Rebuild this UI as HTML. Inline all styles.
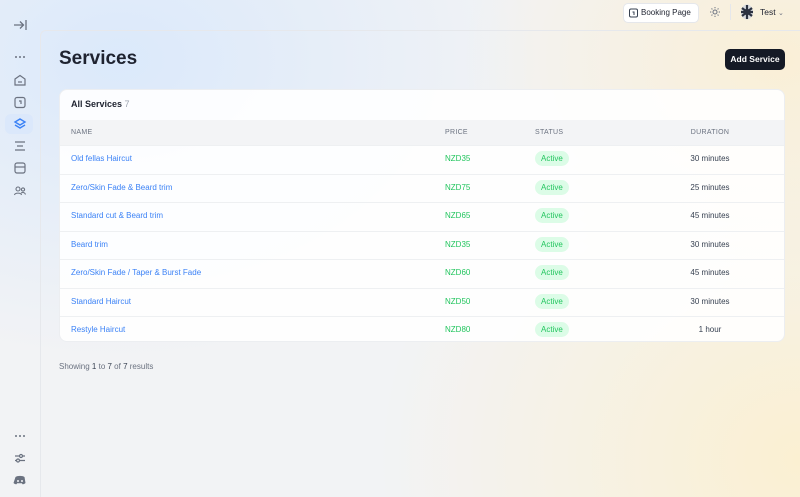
<!DOCTYPE html>
<html><head><meta charset="utf-8"><style>
*{box-sizing:border-box;margin:0;padding:0}
body{width:800px;height:497px;overflow:hidden;font-family:"Liberation Sans",sans-serif;background:#f3f4f6;position:relative}
.bg{position:absolute;inset:0;background:radial-gradient(ellipse 420px 300px at 120px 60px,#dbe9fb 0%,rgba(219,233,251,0) 100%),radial-gradient(ellipse 420px 380px at 800px 460px,#fbf0d2 0%,rgba(251,240,210,0) 100%),radial-gradient(ellipse 320px 240px at 780px 60px,#faefd6 0%,rgba(250,239,214,0) 100%),#f2f3f5}
.side{position:absolute;left:0;top:0;width:40px;height:497px}
.ic{position:absolute;left:11px;width:18px;height:18px;color:#6b7280}
.main{position:absolute;left:40px;top:30px;width:760px;height:467px;border-top:1px solid #e6e8ec;border-left:1px solid #e6e8ec;border-top-left-radius:6px}
h1{position:absolute;left:59px;top:48px;font-size:19px;font-weight:bold;color:#1f2330}
.add{position:absolute;left:725px;top:49px;width:60px;height:21px;background:#151a26;color:#fff;font-size:8.5px;font-weight:bold;border-radius:5px;text-align:center;line-height:21px}
.card{position:absolute;left:59px;top:89px;width:726px;height:253px;background:rgba(255,255,255,.9);border-radius:8px;overflow:hidden;border:1px solid #eceef1}
.ct{position:absolute;left:11px;top:9px;font-size:9px;font-weight:bold;color:#1f2330}
.ct span{color:#9ca3af;font-weight:normal}
.th{position:absolute;left:0;top:30px;width:100%;height:25px;background:#f3f4f6;font-size:7px;color:#6b7280;letter-spacing:.3px}
.th div,.row div{position:absolute}
.row{position:absolute;left:0;width:100%;height:28.5px;border-top:1px solid #eef0f2;font-size:8px}
.n{left:11px;top:8px;color:#3b82f6}
.p{left:385px;top:8px;color:#22c55e}
.s{left:475px;top:5px;background:#dcfce7;color:#22c55e;border-radius:8px;padding:3px 6px;font-size:8px}
.d{left:600px;width:100px;text-align:center;top:8px;color:#374151}
.top{position:absolute;top:3px;font-size:8px;color:#1f2330}
.bp{left:623px;width:76px;height:20px;background:#fff;border:1px solid #e5e7eb;border-radius:5px;line-height:18px;padding-left:17px}
.foot{position:absolute;left:59px;top:362px;font-size:8px;color:#6b7280}
.foot b{color:#374151;font-weight:normal}
</style></head><body>
<div class="bg"></div>
<div class="side">
<svg class="ic" style="top:16px" viewBox="0 0 18 18" fill="none" stroke="#6b7280" stroke-width="1.3"><path d="M3 9h9M9 5.5 12.5 9 9 12.5M15 4v10"/></svg>
<svg class="ic" style="top:48px" viewBox="0 0 18 18" fill="#6b7280"><circle cx="5" cy="9" r="1"/><circle cx="9" cy="9" r="1"/><circle cx="13" cy="9" r="1"/></svg>
<svg class="ic" style="top:71px" viewBox="0 0 18 18" fill="none" stroke="#6b7280" stroke-width="1.2"><path d="M4 8l5-3.5L14 8v6H4z"/><path d="M7 11h4"/></svg>
<svg class="ic" style="top:93px" viewBox="0 0 18 18" fill="none" stroke="#6b7280" stroke-width="1.2"><rect x="4" y="4.5" width="10" height="10" rx="2"/><path d="M8 8h2v3"/></svg>
<div style="position:absolute;left:5px;top:114px;width:28px;height:20px;background:#dbe8fb;border-radius:6px"></div>
<svg class="ic" style="top:115px" viewBox="0 0 18 18" fill="none" stroke="#3b82f6" stroke-width="1.4"><path d="M9 4l5 3-5 3-5-3z"/><path d="M4 10l5 3 5-3"/></svg>
<svg class="ic" style="top:137px" viewBox="0 0 18 18" fill="none" stroke="#6b7280" stroke-width="1.2"><path d="M4 5h10M6 9h6M4 13h10"/></svg>
<svg class="ic" style="top:159px" viewBox="0 0 18 18" fill="none" stroke="#6b7280" stroke-width="1.2"><rect x="4" y="4" width="10" height="10" rx="2"/><path d="M4 8h10"/></svg>
<svg class="ic" style="top:182px" viewBox="0 0 18 18" fill="none" stroke="#6b7280" stroke-width="1.1"><circle cx="7" cy="7" r="2"/><circle cx="12" cy="7.5" r="1.6"/><path d="M3.5 13c.5-2.5 6.5-2.5 7 0M10 11c2-1 4-.5 4.5 1.5"/></svg>
<svg class="ic" style="top:427px" viewBox="0 0 18 18" fill="#6b7280"><circle cx="5" cy="9" r="1"/><circle cx="9" cy="9" r="1"/><circle cx="13" cy="9" r="1"/></svg>
<svg class="ic" style="top:449px" viewBox="0 0 18 18" fill="none" stroke="#6b7280" stroke-width="1.2"><path d="M4 7h10M4 11.5h10"/><circle cx="10" cy="7" r="1.5" fill="#f3f4f6"/><circle cx="7" cy="11.5" r="1.5" fill="#f3f4f6"/></svg>
<svg class="ic" style="top:471px" viewBox="0 0 18 18" fill="#6b7280"><path d="M4.5 6c2-1.5 7-1.5 9 0l1 6c-1 1-2 1.3-3 1.3l-.6-1h-4.8l-.6 1c-1 0-2-.3-3-1.3z"/><circle cx="7" cy="10" r="1" fill="#f3f4f6"/><circle cx="11" cy="10" r="1" fill="#f3f4f6"/></svg>
</div>
<div class="main"></div>
<div class="top bp">Booking Page</div>
<svg style="position:absolute;left:628px;top:7px" width="11" height="11" viewBox="0 0 11 11" fill="none" stroke="#374151" stroke-width="1"><rect x="1.5" y="2" width="8" height="8" rx="1.5"/><path d="M4.5 5h1.5v3"/></svg>
<svg style="position:absolute;left:709px;top:6px" width="12" height="12" viewBox="0 0 12 12" fill="none" stroke="#6b7280" stroke-width="1"><circle cx="6" cy="6" r="2"/><path d="M6 1v1.3M6 9.7V11M1 6h1.3M9.7 6H11M2.5 2.5l.9.9M8.6 8.6l.9.9M2.5 9.5l.9-.9M8.6 3.4l.9-.9"/></svg>
<div style="position:absolute;left:730px;top:4px;width:1px;height:16px;background:#e5e7eb"></div>
<svg style="position:absolute;left:739px;top:3px" width="16" height="18" viewBox="0 0 16 18"><ellipse cx="8" cy="9" rx="6" ry="7.5" fill="#d8dbe0"/><path d="M8 2v14M3 5l10 8M13 5 3 13M2 9h12" stroke="#2b3140" stroke-width="2.2"/><ellipse cx="8" cy="9" rx="2.5" ry="3.5" fill="#2b3140"/></svg>
<div class="top" style="left:760px;top:7px;font-size:8.5px">Test <span style="font-size:7px;color:#6b7280">&#8964;</span></div>
<h1>Services</h1>
<div class="add">Add Service</div>
<div class="card">
<div class="ct">All Services <span>7</span></div>
<div class="th"><div style="left:11px;top:9px">NAME</div><div style="left:385px;top:9px">PRICE</div><div style="left:475px;top:9px">STATUS</div><div style="left:600px;width:100px;text-align:center;top:9px">DURATION</div></div>
<div class="row" style="top:55px"><div class="n">Old fellas Haircut</div><div class="p">NZD35</div><div class="s">Active</div><div class="d">30 minutes</div></div>
<div class="row" style="top:83.5px"><div class="n">Zero/Skin Fade &amp; Beard trim</div><div class="p">NZD75</div><div class="s">Active</div><div class="d">25 minutes</div></div>
<div class="row" style="top:112px"><div class="n">Standard cut &amp; Beard trim</div><div class="p">NZD65</div><div class="s">Active</div><div class="d">45 minutes</div></div>
<div class="row" style="top:140.5px"><div class="n">Beard trim</div><div class="p">NZD35</div><div class="s">Active</div><div class="d">30 minutes</div></div>
<div class="row" style="top:169px"><div class="n">Zero/Skin Fade / Taper &amp; Burst Fade</div><div class="p">NZD60</div><div class="s">Active</div><div class="d">45 minutes</div></div>
<div class="row" style="top:197.5px"><div class="n">Standard Haircut</div><div class="p">NZD50</div><div class="s">Active</div><div class="d">30 minutes</div></div>
<div class="row" style="top:226px"><div class="n">Restyle Haircut</div><div class="p">NZD80</div><div class="s">Active</div><div class="d">1 hour</div></div>
</div>
<div class="foot">Showing <b>1</b> to <b>7</b> of <b>7</b> results</div>
</body></html>
